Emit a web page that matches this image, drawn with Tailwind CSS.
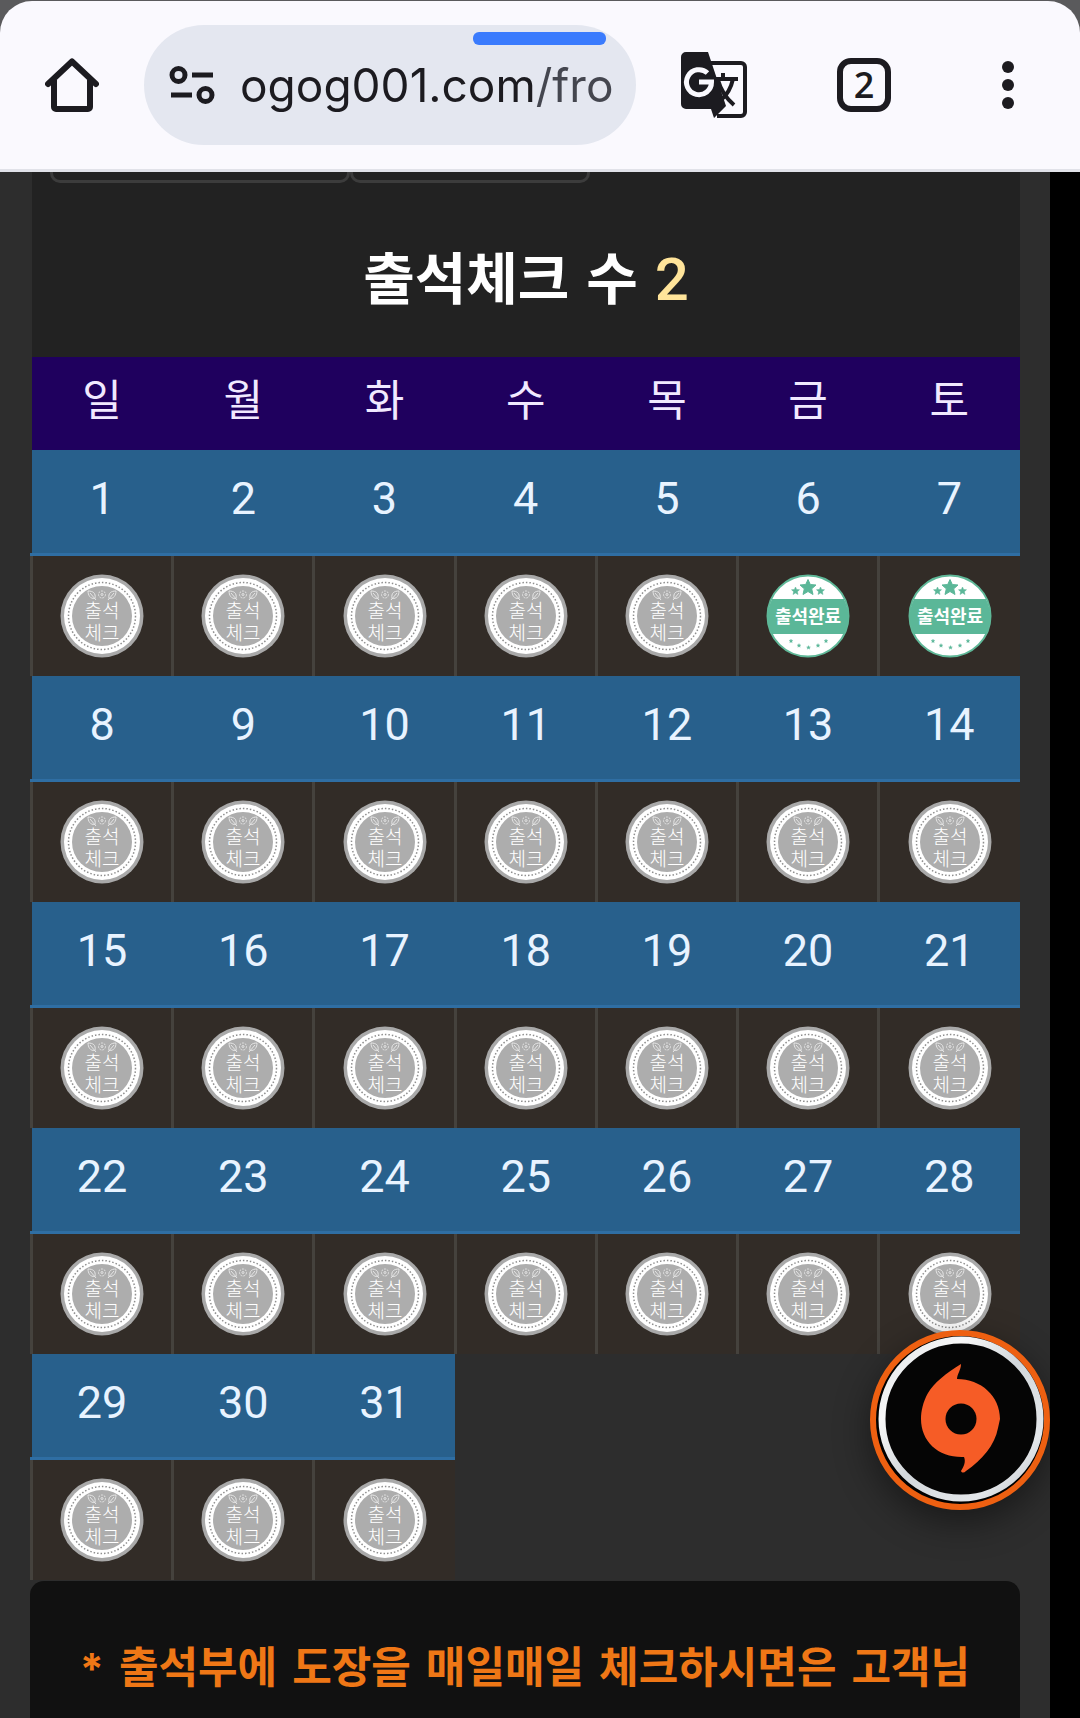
<!DOCTYPE html>
<html lang="ko">
  <head>
    <meta charset="UTF-8" />
    <meta name="viewport" content="width=device-width, initial-scale=1.0" />
    <title>출석체크</title>
    <!-- TailwindCSS -->
    <script src="https://cdn.jsdelivr.net/npm/@tailwindcss/browser@4"></script>
  </head>
  <body
    class="flex min-h-screen flex-col bg-black font-['Roboto','Noto_Sans_CJK_KR',sans-serif] text-white"
  >
    <!-- Browser Bar -->
    <div class="bg-[#5a5a5c] pt-px">
      <header
        class="flex items-center rounded-t-[32px] border-b-3 border-[#e1e2e9] bg-[#faf9fe] py-6 pr-[66px] pl-[45px] text-[#1c1b20]"
      >
        <button aria-label="Home" class="shrink-0">
          <svg class="h-[54px] w-[54px]" viewBox="0 0 54 54" fill="none" stroke="currentColor" stroke-width="6">
            <path d="M3 26 27 3.500 51 26" stroke-linecap="round" stroke-linejoin="round" />
            <path d="M9 22V49a2 2 0 0 0 2 2H43a2 2 0 0 0 2-2V22" />
          </svg>
        </button>
        <div
          class="relative mx-[45px] flex h-[120px] min-w-0 flex-1 items-center rounded-full bg-[#e4e7f0] pr-6 pl-[25px]"
        >
          <svg class="h-[40px] w-[46px] shrink-0" viewBox="0 0 46 40" fill="none" stroke="currentColor" stroke-width="5">
            <circle cx="9.500" cy="10" r="6.500" />
            <path d="M23 10H44M2 30H23" />
            <circle cx="36.500" cy="30" r="6.500" />
          </svg>
          <input
            type="text"
            aria-label="Address"
            value="ogog001.com/fro"
            class="ml-[25px] w-0 flex-1 bg-[linear-gradient(to_right,#1c1b20_295px,#44464f_295px)] bg-clip-text font-['Inter',sans-serif] text-[46px] leading-[60px] text-transparent outline-none"
          />
          <div class="absolute top-[7px] right-[30px] h-[13px] w-[133px] rounded-md bg-[#3a7bfd]"></div>
        </div>
        <button aria-label="Translate" class="shrink-0">
          <svg class="h-[66px] w-[66px]" viewBox="0 0 66 66" fill="none">
            <path
              d="M28 11H60a4 4 0 0 1 4 4V60a4 4 0 0 1-4 4H36"
              stroke="currentColor"
              stroke-width="4"
            />
            <path
              d="M5 0H27L45 54 33 66 30 57H5a5 5 0 0 1-5-5V5a5 5 0 0 1 5-5Z"
              fill="currentColor"
            />
            <path d="M26.500 21A12.500 12.500 0 1 0 30.500 30H18" stroke="#faf9fe" stroke-width="5" />
            <path d="M35 27H57M42 21V27M52 27C50 36 46 43 40 48M37 28C40 39 46 47 53 53" stroke="currentColor" stroke-width="4" />
          </svg>
        </button>
        <button
          aria-label="Tabs"
          class="ml-[90px] flex h-[54px] w-[54px] shrink-0 items-center justify-center rounded-[14px] border-6 border-current font-['Open_Sans',sans-serif] text-4xl leading-9 font-semibold"
        >
          2
        </button>
        <button aria-label="Menu" class="ml-[111px] flex shrink-0 flex-col gap-1.5">
          <span class="h-3 w-3 rounded-full bg-current"></span>
          <span class="h-3 w-3 rounded-full bg-current"></span>
          <span class="h-3 w-3 rounded-full bg-current"></span>
        </button>
      </header>
    </div>

    <!-- Page -->
    <main class="mr-[30px] flex flex-1 flex-col bg-[#2d2d2d] pr-[30px] pl-[30px]">
      <section class="pl-0.5">
        <div class="bg-[#222]">
          <div class="flex pl-[18px]">
            <div class="h-[11px] w-[300px] rounded-b-[10px] border-3 border-t-0 border-[#3c3c3c]"></div>
            <div class="h-[11px] w-[240px] rounded-b-[10px] border-3 border-t-0 border-[#3c3c3c]"></div>
          </div>
          <h1 class="flex items-center justify-center gap-[17px] pt-[57px] pb-[37px] text-[56px] leading-20 font-bold">
            <span>출석체크</span><span>수</span>
            <span class="text-[60px] font-medium text-[#ffe49a]">2</span>
          </h1>
        </div>
      </section>

      <!-- Calendar -->
      <table class="w-full table-fixed border-collapse text-center">
        <thead>
          <tr class="h-[93px] bg-[#1f005e] text-[43px] leading-[60px] text-[#f1e9ff]">
            <th class="p-0 pb-1.5 font-normal">일</th>
            <th class="p-0 pb-1.5 font-normal">월</th>
            <th class="p-0 pb-1.5 font-normal">화</th>
            <th class="p-0 pb-1.5 font-normal">수</th>
            <th class="p-0 pb-1.5 font-normal">목</th>
            <th class="p-0 pb-1.5 font-normal">금</th>
            <th class="p-0 pb-1.5 font-normal">토</th>
          </tr>
        </thead>
        <tbody id="calendar"></tbody>
      </table>

      <!-- Notice -->
      <section class="mt-px flex-1 rounded-t-[14px] bg-[#111] px-4 pt-[54px] text-center">
        <p class="flex justify-center gap-[15px] text-[43px] leading-[66px] font-bold whitespace-nowrap text-[#ef7716]">
          <span class="font-['Inter',sans-serif]">*</span><span>출석부에</span><span>도장을</span><span>매일매일</span><span>체크하시면은</span><span>고객님</span>
        </p>
      </section>
    </main>

    <!-- Floating Button -->
    <button
      aria-label="Open menu"
      class="fixed right-[30px] bottom-[208px] h-[180px] w-[180px] rounded-full border-6 border-[#ee6011] bg-black shadow-[0_12px_36px_rgba(0,0,0,0.45)]"
    >
      <svg class="h-full w-full" viewBox="-84 -84 168 168">
        <defs>
          <linearGradient id="ring" x1="0" y1="0" x2="1" y2="1">
            <stop offset="0" stop-color="#dfe3e6" />
            <stop offset="0.25" stop-color="#f8f8f8" />
            <stop offset="0.5" stop-color="#d2d7db" />
            <stop offset="0.8" stop-color="#e4e7ea" />
            <stop offset="1" stop-color="#b9bec4" />
          </linearGradient>
        </defs>
        <circle cx="1" cy="-1" r="79" fill="#050505" stroke="url(#ring)" stroke-width="7" />
        <path
          d="M1-56C-14-47-26-37-32-27C-37-18-39-9-39-1C-39 22-21 38 4 37C6 42 4 46 1 51C2 53 4 53 6 51C22 40 35 25 38 8L40-1C40-24 21-41-3-41C-3-46 1-50 1-56Z"
          fill="#f65c26"
        />
        <circle cx="1" cy="-1" r="15.500" fill="#050505" />
      </svg>
    </button>

    <script>
      const DAYS = 31;
      const checked = [6, 7];
      const star =
        "M0-8 2.300-3 8-2.500 3.700 1.300 5 7 0 4-5 7-3.700 1.300-8-2.500-2.300-3Z";

      function pendingStamp() {
        return `
          <svg class="mx-auto h-[84px] w-[84px]" viewBox="0 0 84 84">
            <circle cx="42" cy="42" r="41.500" fill="#a9a9a9" />
            <circle cx="42" cy="42" r="38" fill="#fff" />
            <circle cx="42" cy="42" r="33.500" fill="none" stroke="#8f8f8f" stroke-width="1.500" stroke-dasharray="1.500 2" />
            <circle cx="42" cy="42" r="30" fill="#adadad" />
            <g fill="none" stroke="#e6e6e6" stroke-width="1">
              <path d="M28 17C28 21 30 25 35 24.500C36 19 33 17 28 17ZM30 19 36 26" />
              <path d="M56 17C56 21 54 25 49 24.500C48 19 51 17 56 17ZM54 19 48 26" />
              <circle cx="42" cy="20.500" r="3.500" stroke-dasharray="2 1" />
              <circle cx="42" cy="20.500" r="1" />
            </g>
            <g class="font-['Noto_Sans_CJK_KR',sans-serif]" font-size="19" font-weight="300" fill="#fff" text-anchor="middle">
              <text x="42" y="44">출석</text>
              <text x="42" y="66">체크</text>
            </g>
          </svg>`;
      }

      function checkedStamp() {
        return `
          <svg class="mx-auto h-[84px] w-[84px]" viewBox="0 0 84 84">
            <circle cx="42" cy="42" r="40.500" fill="#fff" stroke="#5fb898" stroke-width="2" />
            <path d="M6 25H78A40.500 40.500 0 0 1 78 60H6A40.500 40.500 0 0 1 6 25Z" fill="#5bb798" />
            <g fill="#5bb798" stroke="#5bb798" stroke-linejoin="round">
              <path d="${star}" transform="translate(42 13.500)" />
              <path d="${star}" transform="translate(29.500 17) scale(0.5)" />
              <path d="${star}" transform="translate(54.500 17) scale(0.5)" />
              <path d="${star}" transform="translate(25 67) scale(0.25)" />
              <path d="${star}" transform="translate(33 71.500) scale(0.25)" />
              <path d="${star}" transform="translate(42.500 73.500) scale(0.25)" />
              <path d="${star}" transform="translate(52 71.500) scale(0.25)" />
              <path d="${star}" transform="translate(60 67) scale(0.25)" />
            </g>
            <text class="font-['Noto_Sans_CJK_KR',sans-serif]" x="42" y="49" font-size="18" font-weight="700" fill="#fff" text-anchor="middle">출석완료</text>
          </svg>`;
      }

      let rows = "";
      for (let first = 1; first <= DAYS; first += 7) {
        let dates = "";
        let stamps = "";
        for (let day = first; day < first + 7 && day <= DAYS; day++) {
          dates += `<td class="border-b-3 border-[#2f6ea3] bg-[#28608c] p-0 pb-1">${day}</td>`;
          stamps += `<td class="border-l-3 border-[#45423d] bg-[#322c27] p-0">${
            checked.includes(day) ? checkedStamp() : pendingStamp()
          }</td>`;
        }
        rows += `<tr class="h-[104px] text-[45px] leading-[60px] text-[#e8f3ff]">${dates}</tr>`;
        rows += `<tr class="h-[122px]">${stamps}</tr>`;
      }
      document.getElementById("calendar").innerHTML = rows;
    </script>
  </body>
</html>
